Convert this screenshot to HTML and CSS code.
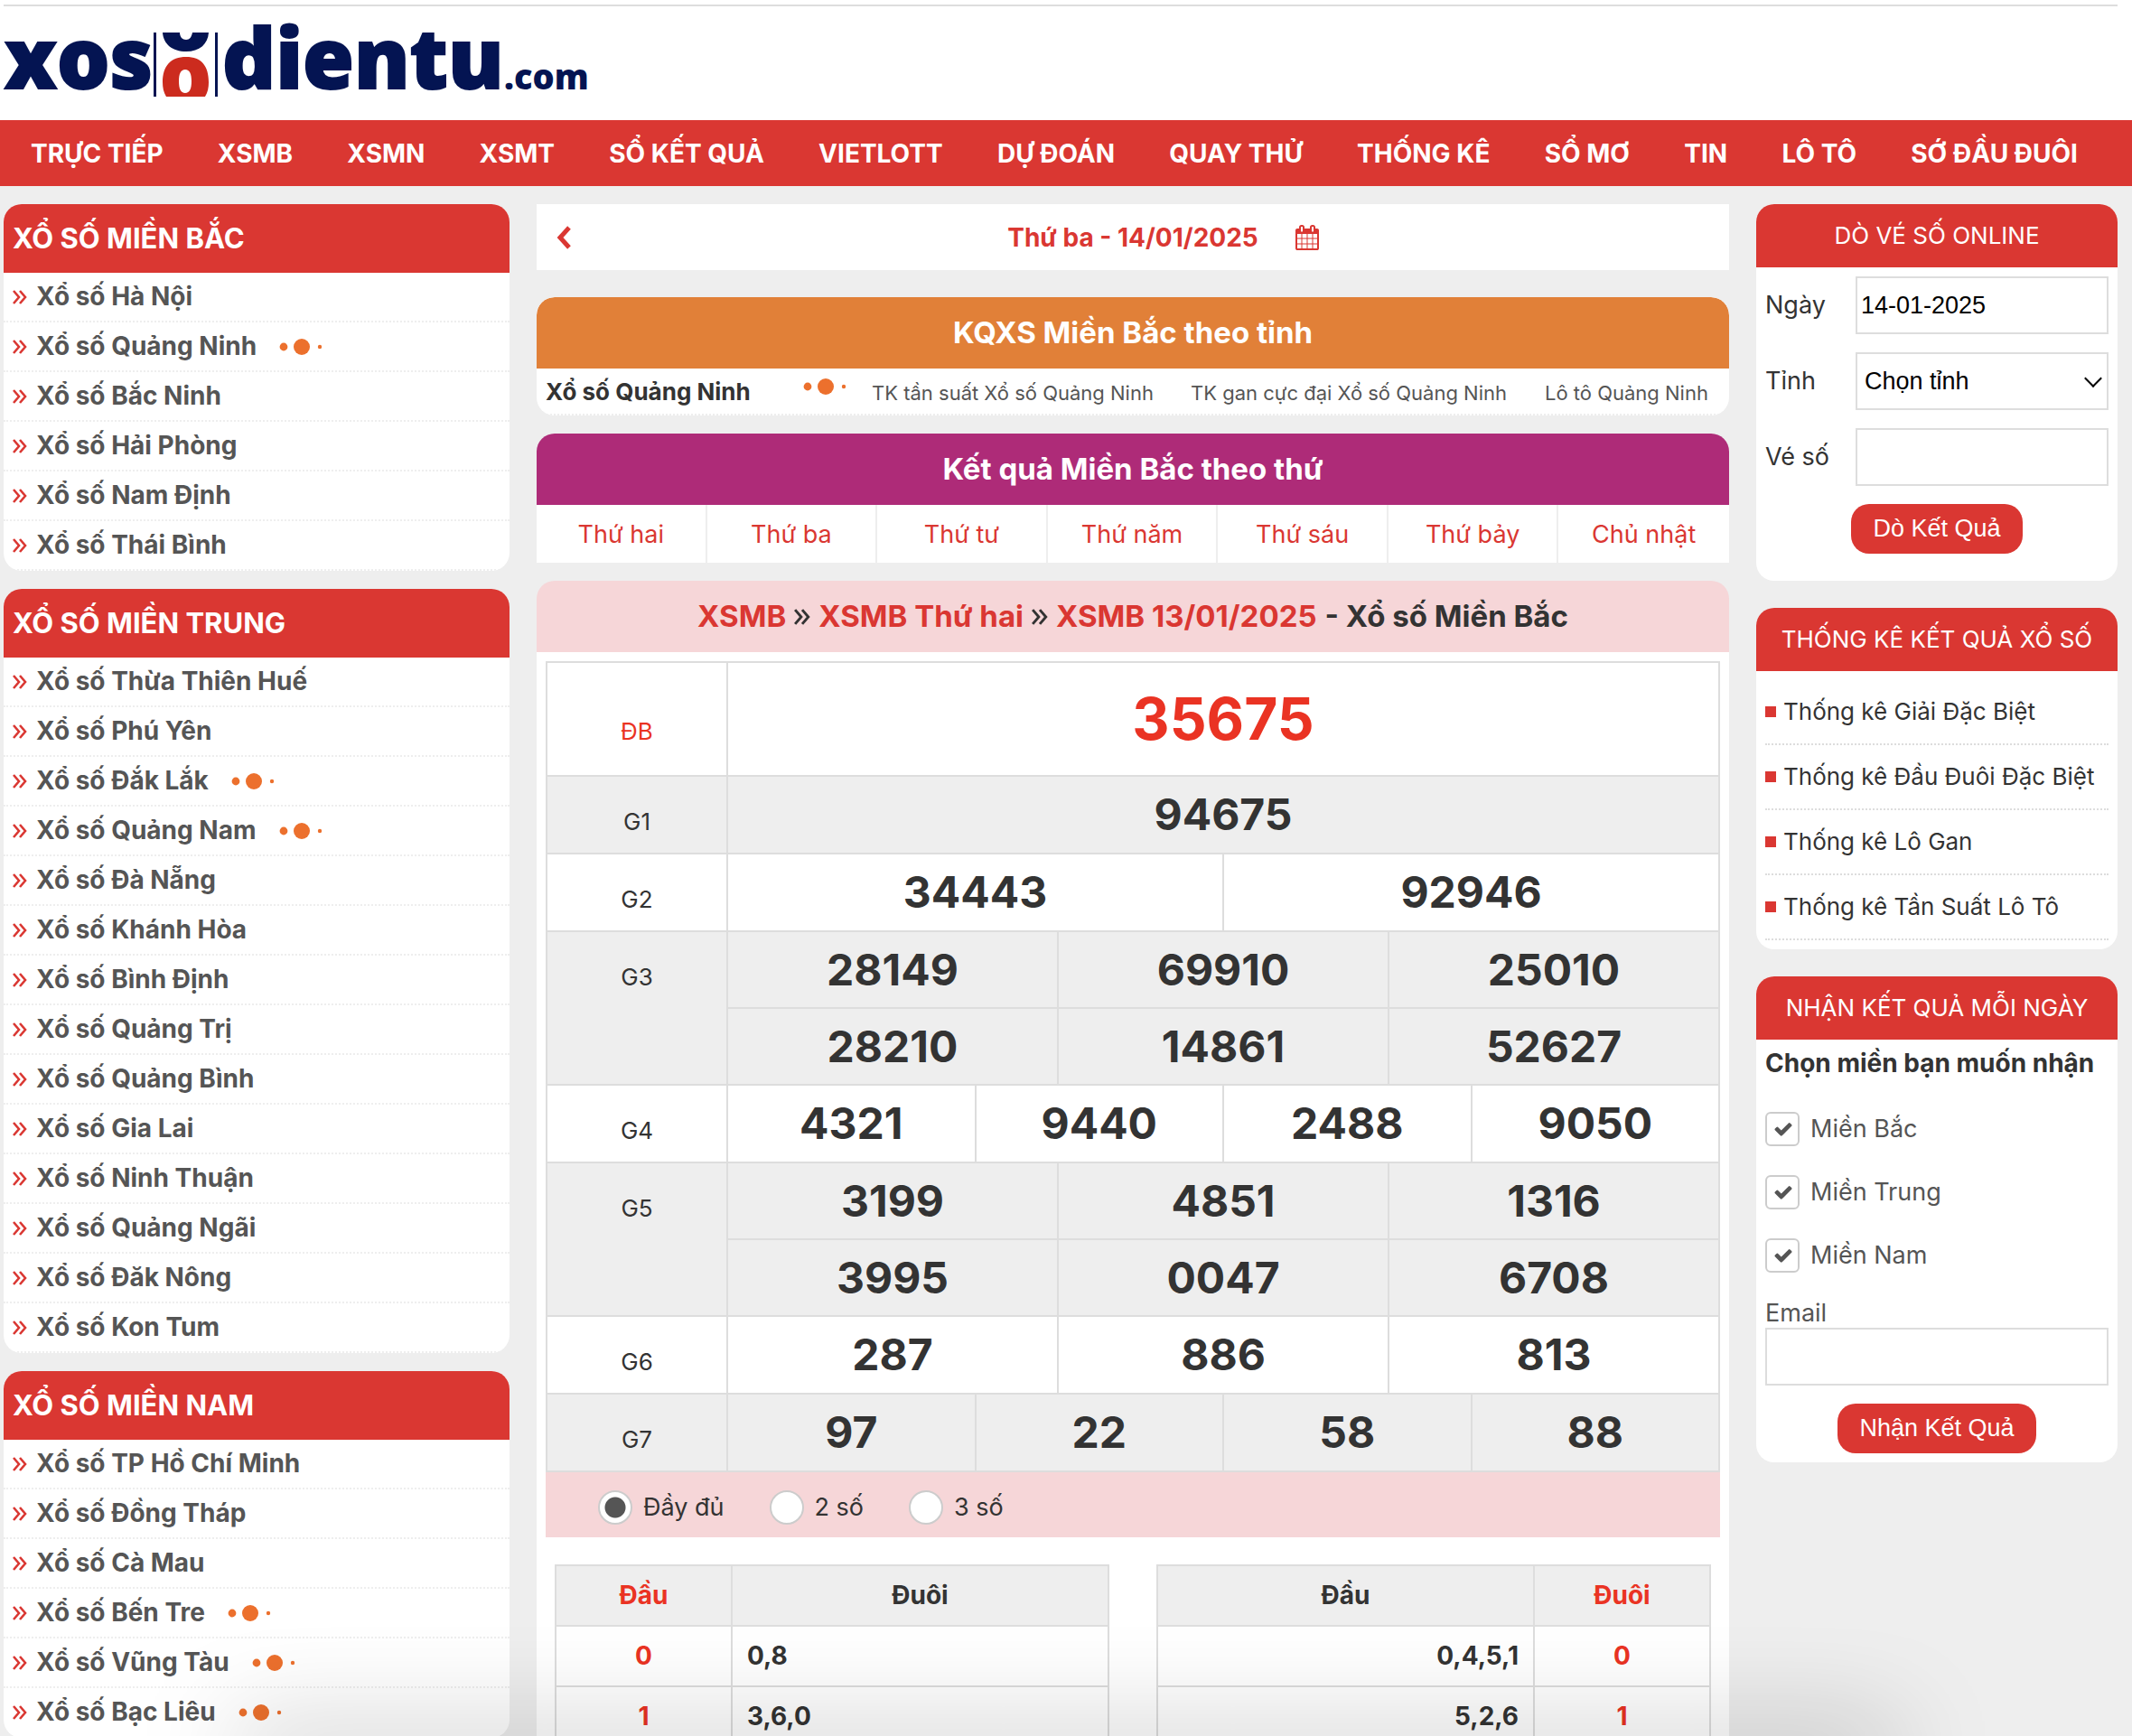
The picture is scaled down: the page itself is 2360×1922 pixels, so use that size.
FILE: index.html
```html
<!doctype html>
<html lang="vi">

<head>
    <meta charset="UTF-8" />
    <meta name="viewport" content="width=device-width, initial-scale=1.0" />
    <title>Xổ số Miền Bắc</title>
    <link rel="stylesheet" href="styles.css">
</head>

<body>
    <svg class="icon-defs" aria-hidden="true">
        <symbol id="i-angle" viewBox="0 0 16 16">
            <path d="M1 1l6 7-6 7M8 1l6 7-6 7" fill="none" stroke="currentColor" stroke-width="2.6" />
        </symbol>
        <symbol id="i-dots" viewBox="0 0 50 20">
            <circle cx="5" cy="10" r="4.4" />
            <circle cx="25" cy="10" r="9" />
            <circle cx="45" cy="10" r="2.2" />
        </symbol>
        <symbol id="i-check" viewBox="0 0 1792 1792">
            <path d="M1671 566q0 40-28 68l-724 724-136 136q-28 28-68 28t-68-28l-136-136-362-362q-28-28-28-68t28-68l136-136q28-28 68-28t68 28l294 295 656-657q28-28 68-28t68 28l136 136q28 28 28 68z" />
        </symbol>
    </svg>

    <div class="page">
        <header class="header">
            <a href="#" class="logo" aria-label="xosodientu.com">
                <svg width="648" height="80" viewBox="4 27 648 80">
                    <g class="logo-text">
                        <text x="5" y="98">xos</text>
                        <text x="246" y="98">dientu</text>
                        <text class="logo-com" x="558" y="99">.com</text>
                    </g>
                    <path class="logo-navy" d="M170 36h3v71h-3zM238 36h3v71h-3z" />
                    <path class="logo-navy" d="M180 36h19c0 5 3 8 7 8s6-3 7-8h18c-1 13-10 21-25 21s-25-8-26-21z" />
                    <path class="logo-red" fill-rule="evenodd" d="M184 107c-3-5-4-10-4-16 0-18 9-28 26-28s25 10 25 28c0 6-1 11-4 16zM205 77c-5 0-7 5-7 13s2 13 7 13 7-5 7-13-2-13-7-13z" />
                </svg>
            </a>
        </header>

        <nav class="nav">
            <a href="#">TRỰC TIẾP</a>
            <a href="#">XSMB</a>
            <a href="#">XSMN</a>
            <a href="#">XSMT</a>
            <a href="#">SỔ KẾT QUẢ</a>
            <a href="#">VIETLOTT</a>
            <a href="#">DỰ ĐOÁN</a>
            <a href="#">QUAY THỬ</a>
            <a href="#">THỐNG KÊ</a>
            <a href="#">SỔ MƠ</a>
            <a href="#">TIN</a>
            <a href="#">LÔ TÔ</a>
            <a href="#">SỚ ĐẦU ĐUÔI</a>
        </nav>

        <div class="content">
            <aside class="col-left">
                <section class="region">
                    <h2>XỔ SỐ MIỀN BẮC</h2>
                    <ul>
                        <li><svg class="angle"><use href="#i-angle" /></svg><a href="#">Xổ số Hà Nội</a></li>
                        <li><svg class="angle"><use href="#i-angle" /></svg><a href="#">Xổ số Quảng Ninh</a><svg class="dots"><use href="#i-dots" /></svg></li>
                        <li><svg class="angle"><use href="#i-angle" /></svg><a href="#">Xổ số Bắc Ninh</a></li>
                        <li><svg class="angle"><use href="#i-angle" /></svg><a href="#">Xổ số Hải Phòng</a></li>
                        <li><svg class="angle"><use href="#i-angle" /></svg><a href="#">Xổ số Nam Định</a></li>
                        <li><svg class="angle"><use href="#i-angle" /></svg><a href="#">Xổ số Thái Bình</a></li>
                    </ul>
                </section>

                <section class="region">
                    <h2>XỔ SỐ MIỀN TRUNG</h2>
                    <ul>
                        <li><svg class="angle"><use href="#i-angle" /></svg><a href="#">Xổ số Thừa Thiên Huế</a></li>
                        <li><svg class="angle"><use href="#i-angle" /></svg><a href="#">Xổ số Phú Yên</a></li>
                        <li><svg class="angle"><use href="#i-angle" /></svg><a href="#">Xổ số Đắk Lắk</a><svg class="dots"><use href="#i-dots" /></svg></li>
                        <li><svg class="angle"><use href="#i-angle" /></svg><a href="#">Xổ số Quảng Nam</a><svg class="dots"><use href="#i-dots" /></svg></li>
                        <li><svg class="angle"><use href="#i-angle" /></svg><a href="#">Xổ số Đà Nẵng</a></li>
                        <li><svg class="angle"><use href="#i-angle" /></svg><a href="#">Xổ số Khánh Hòa</a></li>
                        <li><svg class="angle"><use href="#i-angle" /></svg><a href="#">Xổ số Bình Định</a></li>
                        <li><svg class="angle"><use href="#i-angle" /></svg><a href="#">Xổ số Quảng Trị</a></li>
                        <li><svg class="angle"><use href="#i-angle" /></svg><a href="#">Xổ số Quảng Bình</a></li>
                        <li><svg class="angle"><use href="#i-angle" /></svg><a href="#">Xổ số Gia Lai</a></li>
                        <li><svg class="angle"><use href="#i-angle" /></svg><a href="#">Xổ số Ninh Thuận</a></li>
                        <li><svg class="angle"><use href="#i-angle" /></svg><a href="#">Xổ số Quảng Ngãi</a></li>
                        <li><svg class="angle"><use href="#i-angle" /></svg><a href="#">Xổ số Đăk Nông</a></li>
                        <li><svg class="angle"><use href="#i-angle" /></svg><a href="#">Xổ số Kon Tum</a></li>
                    </ul>
                </section>

                <section class="region">
                    <h2>XỔ SỐ MIỀN NAM</h2>
                    <ul>
                        <li><svg class="angle"><use href="#i-angle" /></svg><a href="#">Xổ số TP Hồ Chí Minh</a></li>
                        <li><svg class="angle"><use href="#i-angle" /></svg><a href="#">Xổ số Đồng Tháp</a></li>
                        <li><svg class="angle"><use href="#i-angle" /></svg><a href="#">Xổ số Cà Mau</a></li>
                        <li><svg class="angle"><use href="#i-angle" /></svg><a href="#">Xổ số Bến Tre</a><svg class="dots"><use href="#i-dots" /></svg></li>
                        <li><svg class="angle"><use href="#i-angle" /></svg><a href="#">Xổ số Vũng Tàu</a><svg class="dots"><use href="#i-dots" /></svg></li>
                        <li><svg class="angle"><use href="#i-angle" /></svg><a href="#">Xổ số Bạc Liêu</a><svg class="dots"><use href="#i-dots" /></svg></li>
                    </ul>
                </section>
            </aside>

            <main class="col-main">
                <div class="date-bar">
                    <a href="#" class="prev" aria-label="Ngày trước">
                        <svg width="16" height="26" viewBox="0 0 16 26"><path d="M14 2L4 13l10 11" fill="none" stroke="currentColor" stroke-width="5" /></svg>
                    </a>
                    <strong>Thứ ba - 14/01/2025</strong>
                    <a href="#" class="calendar" aria-label="Chọn ngày">
                        <svg width="28" height="28" viewBox="0 0 1792 1792"><path fill="currentColor" d="M192 1664h288v-288h-288v288zm352 0h320v-288h-320v288zm-352-352h288v-320h-288v320zm352 0h320v-320h-320v320zm-352-384h288v-288h-288v288zm736 736h320v-288h-320v288zm-384-736h320v-288h-320v288zm768 736h288v-288h-288v288zm-384-352h320v-320h-320v320zm-352-864v-288q0-13-9.5-22.5t-22.5-9.5h-64q-13 0-22.5 9.5t-9.5 22.5v288q0 13 9.5 22.5t22.5 9.5h64q13 0 22.5-9.5t9.5-22.5zm736 864h288v-320h-288v320zm-384-384h320v-288h-320v288zm384 0h288v-288h-288v288zm32-480v-288q0-13-9.5-22.5t-22.5-9.5h-64q-13 0-22.5 9.5t-9.5 22.5v288q0 13 9.5 22.5t22.5 9.5h64q13 0 22.5-9.5t9.5-22.5zm384-64v1280q0 52-38 90t-90 38h-1408q-52 0-90-38t-38-90v-1280q0-52 38-90t90-38h128v-96q0-66 47-113t113-47h64q66 0 113 47t47 113v96h384v-96q0-66 47-113t113-47h64q66 0 113 47t47 113v96h128q52 0 90 38t38 90z" /></svg>
                    </a>
                </div>

                <section class="province">
                    <h2 class="bar bar-orange">KQXS Miền Bắc theo tỉnh</h2>
                    <div class="province-row">
                        <div class="province-name"><a href="#">Xổ số Quảng Ninh</a><svg class="dots"><use href="#i-dots" /></svg></div>
                        <a href="#">TK tần suất Xổ số Quảng Ninh</a>
                        <a href="#">TK gan cực đại Xổ số Quảng Ninh</a>
                        <a href="#">Lô tô Quảng Ninh</a>
                    </div>
                </section>

                <section class="weekdays">
                    <h2 class="bar bar-purple">Kết quả Miền Bắc theo thứ</h2>
                    <div class="days">
                        <a href="#">Thứ hai</a>
                        <a href="#">Thứ ba</a>
                        <a href="#">Thứ tư</a>
                        <a href="#">Thứ năm</a>
                        <a href="#">Thứ sáu</a>
                        <a href="#">Thứ bảy</a>
                        <a href="#">Chủ nhật</a>
                    </div>
                </section>

                <section class="result">
                    <h1 class="bar bar-pink">
                        <a href="#">XSMB</a>
                        <svg class="angle"><use href="#i-angle" /></svg>
                        <a href="#">XSMB Thứ hai</a>
                        <svg class="angle"><use href="#i-angle" /></svg>
                        <a href="#">XSMB 13/01/2025</a>
                        <span>- Xổ số Miền Bắc</span>
                    </h1>
                    <div class="result-body">
                        <table class="prizes">
                            <colgroup>
                                <col class="col-label">
                                <col span="12">
                            </colgroup>
                            <tr class="special">
                                <th>ĐB</th>
                                <td colspan="12">35675</td>
                            </tr>
                            <tr class="shade">
                                <th>G1</th>
                                <td colspan="12">94675</td>
                            </tr>
                            <tr>
                                <th>G2</th>
                                <td colspan="6">34443</td>
                                <td colspan="6">92946</td>
                            </tr>
                            <tr class="shade half">
                                <th rowspan="2">G3</th>
                                <td colspan="4">28149</td>
                                <td colspan="4">69910</td>
                                <td colspan="4">25010</td>
                            </tr>
                            <tr class="shade half">
                                <td colspan="4">28210</td>
                                <td colspan="4">14861</td>
                                <td colspan="4">52627</td>
                            </tr>
                            <tr>
                                <th>G4</th>
                                <td colspan="3">4321</td>
                                <td colspan="3">9440</td>
                                <td colspan="3">2488</td>
                                <td colspan="3">9050</td>
                            </tr>
                            <tr class="shade half">
                                <th rowspan="2">G5</th>
                                <td colspan="4">3199</td>
                                <td colspan="4">4851</td>
                                <td colspan="4">1316</td>
                            </tr>
                            <tr class="shade half">
                                <td colspan="4">3995</td>
                                <td colspan="4">0047</td>
                                <td colspan="4">6708</td>
                            </tr>
                            <tr>
                                <th>G6</th>
                                <td colspan="4">287</td>
                                <td colspan="4">886</td>
                                <td colspan="4">813</td>
                            </tr>
                            <tr class="shade">
                                <th>G7</th>
                                <td colspan="3">97</td>
                                <td colspan="3">22</td>
                                <td colspan="3">58</td>
                                <td colspan="3">88</td>
                            </tr>
                        </table>

                        <div class="digits">
                            <label><input type="radio" name="digits" checked>Đầy đủ</label>
                            <label><input type="radio" name="digits">2 số</label>
                            <label><input type="radio" name="digits">3 số</label>
                        </div>

                        <div class="loto">
                            <table>
                                <tr>
                                    <th class="key">Đầu</th>
                                    <th>Đuôi</th>
                                </tr>
                                <tr>
                                    <td class="key">0</td>
                                    <td>0,8</td>
                                </tr>
                                <tr>
                                    <td class="key">1</td>
                                    <td>3,6,0</td>
                                </tr>
                            </table>
                            <table class="loto-tail">
                                <tr>
                                    <th>Đầu</th>
                                    <th class="key">Đuôi</th>
                                </tr>
                                <tr>
                                    <td>0,4,5,1</td>
                                    <td class="key">0</td>
                                </tr>
                                <tr>
                                    <td>5,2,6</td>
                                    <td class="key">1</td>
                                </tr>
                            </table>
                        </div>
                    </div>
                </section>
            </main>

            <aside class="col-right">
                <section class="box">
                    <h3>DÒ VÉ SỐ ONLINE</h3>
                    <form class="check-form">
                        <div class="field">
                            <label for="date">Ngày</label>
                            <input type="text" id="date" value="14-01-2025">
                        </div>
                        <div class="field">
                            <label for="province">Tỉnh</label>
                            <div class="select">
                                <select id="province">
                                    <option>Chọn tỉnh</option>
                                </select>
                            </div>
                        </div>
                        <div class="field">
                            <label for="ticket">Vé số</label>
                            <input type="text" id="ticket">
                        </div>
                        <button type="button">Dò Kết Quả</button>
                    </form>
                </section>

                <section class="box">
                    <h3>THỐNG KÊ KẾT QUẢ XỔ SỐ</h3>
                    <ul class="stats">
                        <li><a href="#">Thống kê Giải Đặc Biệt</a></li>
                        <li><a href="#">Thống kê Đầu Đuôi Đặc Biệt</a></li>
                        <li><a href="#">Thống kê Lô Gan</a></li>
                        <li><a href="#">Thống kê Tần Suất Lô Tô</a></li>
                    </ul>
                </section>

                <section class="box">
                    <h3>NHẬN KẾT QUẢ MỖI NGÀY</h3>
                    <form class="mail-form">
                        <strong>Chọn miền bạn muốn nhận</strong>
                        <div class="regions">
                            <label><input type="checkbox" checked><svg><use href="#i-check" /></svg>Miền Bắc</label>
                            <label><input type="checkbox" checked><svg><use href="#i-check" /></svg>Miền Trung</label>
                            <label><input type="checkbox" checked><svg><use href="#i-check" /></svg>Miền Nam</label>
                        </div>
                        <label class="mail-label" for="email">Email</label>
                        <input type="email" id="email">
                        <button type="button">Nhận Kết Quả</button>
                    </form>
                </section>
            </aside>
        </div>
    </div>
    <div class="bottom-shade"></div>
</body>

</html>
```

FILE: styles.css
```css
* {
    box-sizing: border-box;
}

body {
    margin: 0;
    background: #eee;
    color: #333;
    font-family: Inter, "Noto Sans", sans-serif;
    font-size: 27px;
    line-height: 32px;
}

a {
    color: inherit;
    text-decoration: none;
}

h1,
h2,
h3,
ul {
    margin: 0;
    padding: 0;
}

ul {
    list-style: none;
}

svg {
    display: block;
    flex: none;
}

.icon-defs {
    position: absolute;
    width: 0;
    height: 0;
}

.page {
    height: 100vh;
    overflow: hidden;
}

/* header */
.header {
    background: #fff;
    padding: 5px 16px 26px 4px;
}

.logo {
    display: block;
    padding-top: 20px;
    border-top: 2px solid #ddd;
}

.logo svg {
    overflow: visible;
}

.logo-text {
    font-family: "Open Sans", "Noto Sans", sans-serif;
    font-size: 92px;
    font-weight: 800;
    fill: #041452;
    stroke: #041452;
    stroke-width: 2px;
}

.logo-com {
    font-size: 38px;
    stroke: none;
}

.logo-navy {
    fill: #041452;
}

.logo-red {
    fill: #cc2b1e;
}

.nav {
    display: flex;
    justify-content: space-between;
    padding: 0 60px 0 34px;
    background: #da3732;
    color: #fff;
    font-size: 28px;
    font-weight: 700;
    line-height: 74px;
    height: 73px;
}

.content {
    display: grid;
    grid-template-columns: 560px 1fr 400px;
    gap: 30px;
    padding: 20px 16px 20px 4px;
}

.angle {
    width: 16px;
    height: 16px;
}

.dots {
    width: 50px;
    height: 20px;
    fill: #ec702d;
}

/* left column */
.col-left,
.col-main {
    display: flex;
    flex-direction: column;
    gap: 20px;
}

.region {
    background: #fff;
    border-radius: 20px;
    overflow: hidden;
}

.region h2 {
    padding: 0 10px;
    background: #da3732;
    color: #fff;
    font-size: 31px;
    line-height: 76px;
}

.region li {
    display: flex;
    align-items: center;
    padding-left: 10px;
    border-bottom: 2px dotted #eee;
    color: #555;
    font-size: 28px;
    font-weight: 700;
    line-height: 53px;
}

.region .angle {
    margin-right: 10px;
    color: #da3732;
}

.region .dots {
    margin-left: 25px;
}

/* main column */
.date-bar {
    display: grid;
    grid-template-columns: 1fr auto 1fr;
    align-items: center;
    height: 73px;
    margin-bottom: 10px;
    padding: 0 22px;
    background: #fff;
    color: #da3732;
    font-size: 28px;
}

.calendar {
    margin-left: 40px;
}

.bar {
    border-radius: 20px 20px 0 0;
    font-size: 33px;
    line-height: 79px;
    text-align: center;
}

.bar-orange {
    background: #e18038;
    color: #fff;
}

.bar-purple {
    background: #ae2b78;
    color: #fff;
}

.province {
    background: #fff;
    border-radius: 20px;
    overflow: hidden;
}

.province-row {
    display: grid;
    grid-template-columns: 361fr 353fr 392fr 214fr;
    align-items: baseline;
    height: 52px;
    border-bottom: 2px dotted #eee;
    color: #555;
    font-size: 22px;
    line-height: 51px;
}

.province-row > * {
    padding-left: 10px;
    white-space: nowrap;
}

.province-name {
    display: flex;
    justify-content: space-between;
    padding-right: 16px;
    color: #333;
    font-size: 26px;
    font-weight: 700;
}

.province-name .dots {
    margin-top: 10px;
}

.days {
    display: grid;
    grid-template-columns: repeat(7, 1fr);
    height: 64px;
    background: #fff;
    color: #da3732;
    line-height: 66px;
    text-align: center;
}

.days a {
    border-right: 2px solid #eee;
}

.days a:last-child {
    border-right: 0;
}

.bar-pink {
    display: flex;
    justify-content: center;
    align-items: center;
    gap: 9px;
    background: #f6d6d8;
}

.bar-pink a {
    color: #da3732;
}

.bar-pink .angle {
    width: 18px;
    height: 18px;
}

.result-body {
    padding: 10px;
    background: #fff;
}

.prizes {
    width: 100%;
    table-layout: fixed;
    border-collapse: collapse;
}

.col-label {
    width: 200px;
}

.prizes th,
.prizes td {
    padding: 0;
    border: 2px solid #ddd;
    text-align: center;
    vertical-align: baseline;
}

.prizes th {
    font-size: 26px;
    font-weight: 400;
}

.prizes td {
    font-size: 48px;
    font-weight: 700;
    line-height: 84px;
}

.prizes .half td {
    line-height: 83px;
}

.prizes .special {
    color: #ea3323;
}

.prizes .special td {
    font-size: 64px;
    line-height: 124px;
}

.shade {
    background: #eee;
}

.digits {
    display: flex;
    gap: 50px;
    padding: 20px 58px 14px;
    background: #f6d6d8;
}

.digits label {
    display: flex;
    align-items: center;
    gap: 12px;
}

.digits input {
    appearance: none;
    width: 38px;
    height: 38px;
    margin: 0;
    border: 2px solid #ccc;
    border-radius: 50%;
    background: #fff;
}

.digits input:checked {
    background: radial-gradient(circle, #555 11px, #fff 12px);
}

.loto {
    display: grid;
    grid-template-columns: 1fr 1fr;
    gap: 52px;
    padding: 30px 10px;
}

.loto table {
    table-layout: fixed;
    border-collapse: collapse;
}

.loto th,
.loto td {
    padding: 0 16px;
    border: 2px solid #ddd;
    font-size: 28px;
    font-weight: 700;
    line-height: 65px;
}

.loto th {
    background: #eee;
}

.loto .key {
    width: 195px;
    color: #ea3323;
    text-align: center;
}

.loto-tail td {
    text-align: right;
}

/* right column */
.col-right {
    display: flex;
    flex-direction: column;
    gap: 30px;
}

.box {
    background: #fff;
    border-radius: 20px;
    overflow: hidden;
}

.box h3 {
    background: #da3732;
    color: #fff;
    font-size: 26px;
    font-weight: 400;
    line-height: 70px;
    text-align: center;
}

.box button {
    display: block;
    height: 55px;
    margin: 20px auto 0;
    padding: 0 24px;
    border: 0;
    border-radius: 20px;
    background: #da3732;
    color: #fff;
    font-family: "Liberation Sans", Arial, sans-serif;
    font-size: 27px;
}

.box input[type="text"],
.box input[type="email"],
.box select {
    display: block;
    width: 100%;
    height: 64px;
    padding: 0 4px;
    border: 2px solid #ddd;
    border-radius: 0;
    background: #fff;
    color: #000;
    font-family: "Liberation Sans", Arial, sans-serif;
    font-size: 27px;
}

.check-form {
    padding: 10px 10px 30px;
}

.field {
    display: grid;
    grid-template-columns: 100px 1fr;
    align-items: center;
}

.field + .field {
    margin-top: 20px;
}

.select {
    position: relative;
}

.box select {
    appearance: none;
    padding: 0 8px;
}

.select::after {
    content: "";
    position: absolute;
    top: 22px;
    right: 10px;
    width: 12px;
    height: 12px;
    border-right: 2px solid #000;
    border-bottom: 2px solid #000;
    transform: rotate(45deg);
    pointer-events: none;
}

.stats {
    padding: 10px;
}

.stats li {
    display: flex;
    align-items: center;
    gap: 8px;
    border-bottom: 2px dotted #ddd;
    font-size: 26px;
    line-height: 70px;
}

.stats li::before {
    content: "";
    width: 12px;
    height: 12px;
    background: #da3732;
}

.mail-form {
    padding: 10px;
    color: #555;
}

.mail-form strong {
    display: block;
    color: #333;
    font-size: 28px;
}

.mail-label {
    display: block;
}

.regions {
    display: grid;
    gap: 32px;
    margin: 38px 0 29px;
}

.regions label {
    display: flex;
    align-items: center;
    gap: 12px;
    position: relative;
}

.regions input {
    appearance: none;
    width: 38px;
    height: 38px;
    margin: 0;
    border: 2px solid #ccc;
    border-radius: 6px;
}

.regions svg {
    position: absolute;
    left: 9px;
    width: 22px;
    height: 22px;
    fill: #555;
}

/* soft shade rising from the lower edge of the window */
.bottom-shade {
    position: fixed;
    right: 11%;
    bottom: -30px;
    left: 11%;
    height: 30px;
    box-shadow: 0 0 110px rgba(0, 0, 0, 0.4);
    pointer-events: none;
}
```
